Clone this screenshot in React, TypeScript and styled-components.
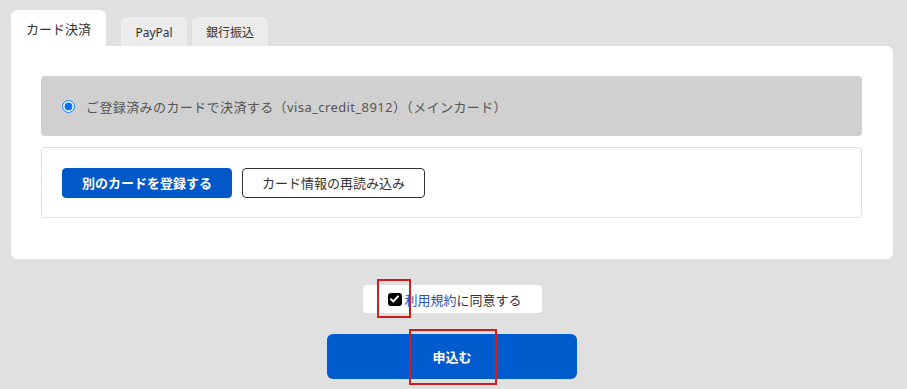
import styled, { createGlobalStyle } from 'styled-components'

const GlobalStyle = createGlobalStyle`
  html, body {
    margin: 0;
    padding: 0;
    background: #e0e0e0;
  }
  body {
    font-family: "Noto Sans", "Noto Sans CJK JP", sans-serif;
    color: #333;
  }
  * {
    box-sizing: border-box;
  }
`

const Page = styled.div`
  position: relative;
  width: 907px;
  height: 389px;
  padding: 10px 14px 0 11px;
  overflow: hidden;
`

const Tabs = styled.div`
  display: flex;
  align-items: flex-end;
  gap: 5px;
`

const Tab = styled.div<{ $active?: boolean; $w: number }>`
  display: flex;
  align-items: center;
  justify-content: center;
  border-radius: 6px 6px 0 0;
  background: ${(p) => (p.$active ? '#fff' : '#ececec')};
  height: ${(p) => (p.$active ? '36px' : '29px')};
  width: ${(p) => p.$w}px;
  margin-right: ${(p) => (p.$active ? '10px' : '0')};
  font-size: ${(p) => (p.$active ? '13px' : '12px')};
  padding-top: ${(p) => (p.$active ? '0' : '1px')};
  color: #333;
`

const Panel = styled.div`
  background: #fff;
  border-radius: 0 6px 6px 6px;
  padding: 30px 31px 41px 30px;
  display: flex;
  flex-direction: column;
  gap: 11px;
`

const SavedCard = styled.label`
  display: flex;
  align-items: center;
  gap: 11px;
  height: 60px;
  padding-left: 21px;
  background: #d0d0d0;
  border-radius: 4px;
  font-size: 13px;
  letter-spacing: 0.4px;
  color: #555;
`

const Radio = styled.input`
  margin: 0;
  width: 13px;
  height: 13px;
`

const ActionBox = styled.div`
  display: flex;
  align-items: center;
  gap: 10px;
  height: 71px;
  padding: 0 20px;
  border: 1px solid #e0e0e0;
  border-radius: 4px;
`

const Button = styled.button<{ $primary?: boolean }>`
  height: 30px;
  padding: 0 19px;
  border-radius: 4px;
  font-family: inherit;
  font-size: 13px;
  font-weight: ${(p) => (p.$primary ? 600 : 400)};
  border: 1px solid ${(p) => (p.$primary ? '#0058c9' : '#333')};
  background: ${(p) => (p.$primary ? '#0058c9' : '#fff')};
  color: ${(p) => (p.$primary ? '#fff' : '#333')};
  cursor: pointer;
`

const Footer = styled.div`
  width: 882px;
  display: flex;
  flex-direction: column;
  align-items: center;
  padding-top: 26px;
  gap: 21px;
`

const Agree = styled.label`
  display: flex;
  align-items: center;
  height: 28px;
  width: 179px;
  padding-left: 25px;
  background: #fff;
  border-radius: 4px;
  font-size: 13px;
  color: #333;
`

const Check = styled.span`
  display: inline-flex;
  align-items: center;
  justify-content: center;
  width: 14px;
  height: 13px;
  margin-right: 3px;
  background: #000;
  border-radius: 3px;
`

const TermsLink = styled.a`
  color: #2b52b0;
  text-decoration: none;
`

const Submit = styled.button`
  width: 250px;
  height: 45px;
  border: none;
  border-radius: 6px;
  background: #005bcc;
  color: #fff;
  font-family: inherit;
  font-size: 13px;
  font-weight: 700;
`

const Marker = styled.div<{ $x: number; $y: number; $w: number; $h: number }>`
  position: absolute;
  left: ${(p) => p.$x}px;
  top: ${(p) => p.$y}px;
  width: ${(p) => p.$w}px;
  height: ${(p) => p.$h}px;
  border: 2px solid #d41c1c;
  pointer-events: none;
`

export default function App() {
  return (
    <>
      <GlobalStyle />
      <Page>
        <Tabs>
          <Tab $active $w={95}>カード決済</Tab>
          <Tab $w={66}>PayPal</Tab>
          <Tab $w={76}>銀行振込</Tab>
        </Tabs>

        <Panel>
          <SavedCard>
            <Radio type="radio" name="card" defaultChecked />
            <span>ご登録済みのカードで決済する（visa_credit_8912）（メインカード）</span>
          </SavedCard>
          <ActionBox>
            <Button $primary>別のカードを登録する</Button>
            <Button>カード情報の再読み込み</Button>
          </ActionBox>
        </Panel>

        <Footer>
          <Agree>
            <Check>
              <svg width="9" height="8" viewBox="0 0 9 8">
                <path d="M1 4.2 L3.4 6.4 L8 1.4" fill="none" stroke="#fff" strokeWidth="2" strokeLinecap="round" strokeLinejoin="round" />
              </svg>
            </Check>
            <TermsLink href="#">利用規約</TermsLink>に同意する
          </Agree>
          <Submit>申込む</Submit>
        </Footer>

        <Marker $x={377} $y={279} $w={34} $h={39} />
        <Marker $x={409} $y={329} $w={88} $h={56} />
      </Page>
    </>
  )
}
